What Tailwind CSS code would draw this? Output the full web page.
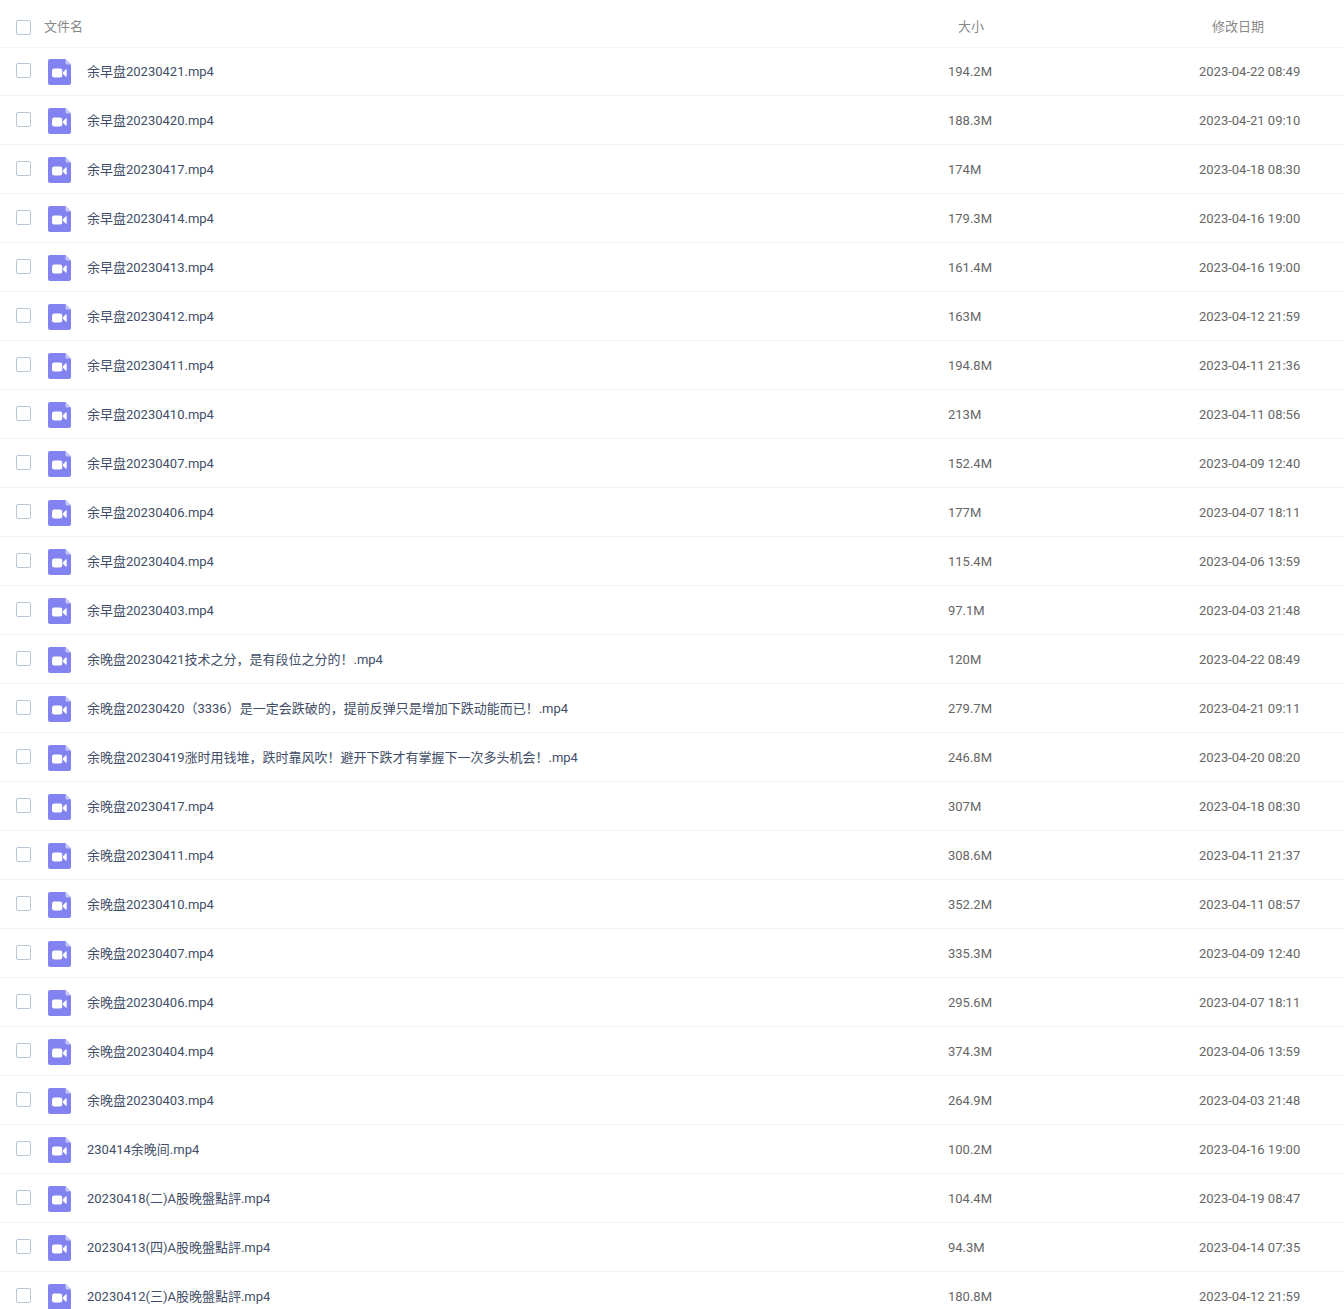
<!DOCTYPE html>
<html lang="zh-CN">
<head>
    <meta charset="UTF-8">
    <meta name="viewport" content="width=device-width, initial-scale=1.0">
    <title>文件列表</title>
    <script src="https://cdn.jsdelivr.net/npm/@tailwindcss/browser@4"></script>
</head>
<body class="bg-white font-[Roboto,'Noto_Sans_CJK_SC',sans-serif] text-[13px] leading-[17px]">
    <!-- video file icon, reused by every row -->
    <svg class="hidden">
        <symbol id="videoIcon" viewBox="0 0 23 26">
            <path d="M2 0H17.5L23 5.5V24a2 2 0 0 1-2 2H2a2 2 0 0 1-2-2V2a2 2 0 0 1 2-2z" fill="#8283f0"/>
            <path d="M17.5 0L23 5.5H19a1.5 1.5 0 0 1-1.5-1.5z" fill="#c6c7fa"/>
            <rect x="4" y="9.5" width="10.3" height="9" rx="2.2" fill="#fff"/>
            <path d="M15 13.2L17.6 10.4Q18.7 9.8 18.7 10.9V17.1Q18.7 18.2 17.6 17.6L15 14.8z" fill="#fff"/>
        </symbol>
    </svg>

    <main class="h-screen overflow-x-hidden overflow-y-auto [scrollbar-width:none]">
        <table class="w-full table-fixed">
            <thead>
                <tr class="h-[47px] text-left text-[#888888] shadow-[0_1px_0_#f2f4f8]">
                    <th class="w-11 pl-4 pt-2">
                        <input type="checkbox" id="checkAll" aria-label="全选" class="block size-[15px] appearance-none rounded-xs border border-[#b9c6d6] bg-white checked:bg-[#8283f0]">
                    </th>
                    <th class="pt-1.5 font-normal">文件名</th>
                    <th class="w-[251px] pl-[22px] pt-1.5 font-normal">大小</th>
                    <th class="w-[157px] pl-[25px] pt-1.5 font-normal">修改日期</th>
                </tr>
            </thead>
            <tbody id="fileList"></tbody>
        </table>
    </main>

    <script>
        const files = [
            ['余早盘20230421.mp4', '194.2M', '2023-04-22 08:49'],
            ['余早盘20230420.mp4', '188.3M', '2023-04-21 09:10'],
            ['余早盘20230417.mp4', '174M', '2023-04-18 08:30'],
            ['余早盘20230414.mp4', '179.3M', '2023-04-16 19:00'],
            ['余早盘20230413.mp4', '161.4M', '2023-04-16 19:00'],
            ['余早盘20230412.mp4', '163M', '2023-04-12 21:59'],
            ['余早盘20230411.mp4', '194.8M', '2023-04-11 21:36'],
            ['余早盘20230410.mp4', '213M', '2023-04-11 08:56'],
            ['余早盘20230407.mp4', '152.4M', '2023-04-09 12:40'],
            ['余早盘20230406.mp4', '177M', '2023-04-07 18:11'],
            ['余早盘20230404.mp4', '115.4M', '2023-04-06 13:59'],
            ['余早盘20230403.mp4', '97.1M', '2023-04-03 21:48'],
            ['余晚盘20230421技术之分，是有段位之分的！.mp4', '120M', '2023-04-22 08:49'],
            ['余晚盘20230420（3336）是一定会跌破的，提前反弹只是增加下跌动能而已！.mp4', '279.7M', '2023-04-21 09:11'],
            ['余晚盘20230419涨时用钱堆，跌时靠风吹！避开下跌才有掌握下一次多头机会！.mp4', '246.8M', '2023-04-20 08:20'],
            ['余晚盘20230417.mp4', '307M', '2023-04-18 08:30'],
            ['余晚盘20230411.mp4', '308.6M', '2023-04-11 21:37'],
            ['余晚盘20230410.mp4', '352.2M', '2023-04-11 08:57'],
            ['余晚盘20230407.mp4', '335.3M', '2023-04-09 12:40'],
            ['余晚盘20230406.mp4', '295.6M', '2023-04-07 18:11'],
            ['余晚盘20230404.mp4', '374.3M', '2023-04-06 13:59'],
            ['余晚盘20230403.mp4', '264.9M', '2023-04-03 21:48'],
            ['230414余晚间.mp4', '100.2M', '2023-04-16 19:00'],
            ['20230418(二)A股晚盤點評.mp4', '104.4M', '2023-04-19 08:47'],
            ['20230413(四)A股晚盤點評.mp4', '94.3M', '2023-04-14 07:35'],
            ['20230412(三)A股晚盤點評.mp4', '180.8M', '2023-04-12 21:59']
        ];

        document.getElementById('fileList').innerHTML = files.map(([name, size, date], i) => `
            <tr class="h-[49px] text-[#666666] shadow-[inset_0_-1px_0_#f0f4fa]">
                <td class="pb-0.5 pl-4">
                    <input type="checkbox" id="file${i}" class="block size-[15px] appearance-none rounded-xs border border-[#b9c6d6] bg-white checked:bg-[#8283f0]">
                </td>
                <td class="pl-1">
                    <label for="file${i}" class="flex items-center gap-4 text-[#424e67]">
                        <svg class="mt-px h-[26px] w-[23px] shrink-0"><use href="#videoIcon"/></svg>
                        <span class="truncate">${name}</span>
                    </label>
                </td>
                <td class="pl-3">${size}</td>
                <td class="pl-3">${date}</td>
            </tr>
        `).join('');

        document.getElementById('checkAll').addEventListener('change', function() {
            document.querySelectorAll('#fileList input').forEach(box => {
                box.checked = this.checked;
            });
        });
    </script>
</body>
</html>
